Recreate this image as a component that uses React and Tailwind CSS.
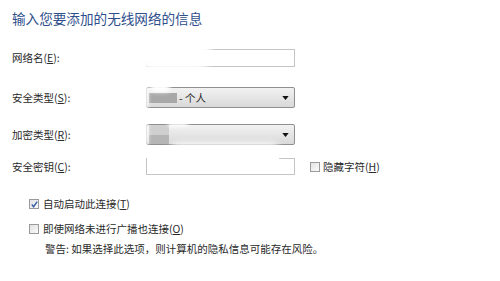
import React from "react";

const font = { fontFamily: '"Noto Sans CJK SC", "Noto Sans", sans-serif' };

const Box = ({ checked }) => (
  <span className="relative inline-flex h-[10px] w-[10px] shrink-0 items-center justify-center border border-[#9a9a9a] bg-gradient-to-br from-[#e2e2e2] to-[#fbfbfb]">
    {checked && (
      <svg viewBox="0 0 10 10" className="absolute h-[9px] w-[9px]">
        <path d="M2 5 L4 7.5 L8 1.8" fill="none" stroke="#3a5fa8" strokeWidth="1.6" />
      </svg>
    )}
  </span>
);

const Arrow = () => (
  <svg viewBox="0 0 8 5" className="h-[4px] w-[7px]">
    <path d="M0 0 H8 L4 5 Z" fill="#111" />
  </svg>
);

const Select = ({ children }) => (
  <div className="flex h-full w-[149px] items-center justify-between rounded-[2px] border border-[#8e8f8f] bg-gradient-to-b from-[#f2f2f2] to-[#d9d9d9] pl-[2px] pr-[5px]">
    <div className="flex items-center gap-[2px] text-[10.5px] text-[#2a2a2a]">{children}</div>
    <Arrow />
  </div>
);

const Row = ({ label, className, children }) => (
  <div className={`flex items-center ${className}`}>
    <div className="w-[134px] text-[10.5px] text-[#2a2a2a]">{label}</div>
    {children}
  </div>
);

export default function App() {
  return (
    <div className="relative h-[281px] w-[500px] overflow-hidden bg-white" style={font}>
      <div className="flex flex-col pl-3 pt-[9px]">
        <div className="h-[18px] text-[13.6px] leading-[18px] text-[#2f4f8c]">输入您要添加的无线网络的信息</div>

        <Row label={<>网络名(<u>E</u>):</>} className="mt-[22px] h-[18px]">
          <div className="h-full w-[149px] border border-[#c4c4c4] bg-white" />
        </Row>

        <Row label={<>安全类型(<u>S</u>):</>} className="mt-[20px] h-[21px]">
          <Select>
            <span className="h-[10px] w-[28px] bg-[#a8a8a8]" />
            <span>- 个人</span>
          </Select>
        </Row>

        <Row label={<>加密类型(<u>R</u>):</>} className="mt-[16px] h-[21px]">
          <Select>
            <span className="flex h-[19px] w-[20px] flex-col">
              <span className="h-1/2 bg-[#cfcfcf]" />
              <span className="h-1/2 bg-[#b5b5b5]" />
            </span>
          </Select>
        </Row>

        <Row label={<>安全密钥(<u>C</u>):</>} className="mt-[13px] h-[17px]">
          <div className="flex h-full w-[149px] flex-col border border-t-0 border-[#c4c4c4] bg-white">
            <div className="flex h-px justify-end">
              <div className="h-px w-[15px] bg-[#c4c4c4]" />
            </div>
          </div>
          <div className="ml-[15px] flex items-center gap-[3px] text-[10.5px] text-[#2a2a2a]">
            <Box />
            <span>隐藏字符(<u>H</u>)</span>
          </div>
        </Row>

        <div className="mt-[22px] flex h-[14px] items-center gap-[4px] pl-[17px] text-[10.5px] text-[#2a2a2a]">
          <Box checked />
          <span>自动启动此连接(<u>T</u>)</span>
        </div>
        <div className="mt-[11px] flex h-[14px] items-center gap-[4px] pl-[17px] text-[10.5px] text-[#2a2a2a]">
          <Box />
          <span>即使网络未进行广播也连接(<u>O</u>)</span>
        </div>
        <div className="mt-[7px] h-[12px] pl-[33px] text-[10.5px] leading-[12px] text-[#2a2a2a]">
          警告: 如果选择此选项，则计算机的隐私信息可能存在风险。
        </div>
      </div>

      {/* blurred smudges over the fields */}
      <div className="pointer-events-none absolute left-[138px] top-[40px] h-[30px] w-[74px] rounded-full bg-white blur-[3px]" />
      <div className="pointer-events-none absolute left-[134px] top-[82px] h-[30px] w-[14px] rounded-full bg-white blur-[2px]" />
      <div className="pointer-events-none absolute left-[150px] top-[84px] h-[8px] w-[20px] rounded-full bg-white blur-[2px]" />
      <div className="pointer-events-none absolute left-[134px] top-[120px] h-[28px] w-[14px] rounded-full bg-white blur-[2px]" />
      <div className="pointer-events-none absolute left-[168px] top-[120px] h-[6px] w-[20px] bg-white blur-[2px]" />
      <div className="pointer-events-none absolute left-[170px] top-[143px] h-[16px] w-[110px] rounded-full bg-white blur-[3px]" />
    </div>
  );
}
